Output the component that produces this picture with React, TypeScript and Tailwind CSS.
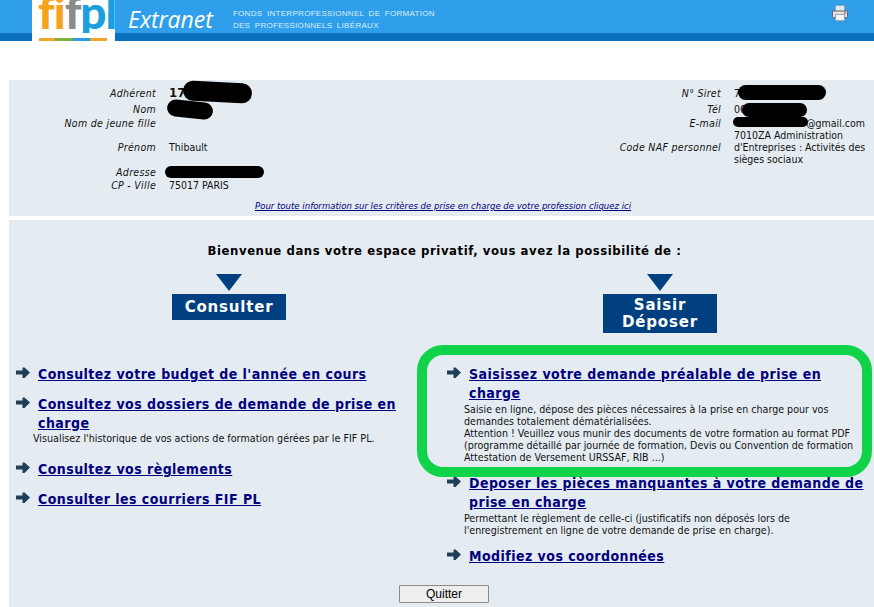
const tahoma = "font-['DejaVu_Sans_Condensed','DejaVu_Sans',sans-serif]";

function Blob({ className }: { className: string }) {
  return <div className={`absolute bg-black rounded-full ${className}`} />;
}

function Arrow() {
  return (
    <svg width="14" height="12" viewBox="0 0 14 12" className="shrink-0 mt-[2px]">
      <path d="M0 3.500h6.500V0.500h2L14 5.500 8.500 11h-2V7.500H0z" fill="#1f3f57" />
    </svg>
  );
}

function Printer() {
  return (
    <svg width="16" height="16" viewBox="0 0 16 16">
      <rect x="3.500" y="0.500" width="9" height="6" fill="#dfeaf2" stroke="#8fa3b3" />
      <rect x="0.500" y="6" width="15" height="6.500" rx="1" fill="#e8e4e4" stroke="#6a5a66" />
      <rect x="3.500" y="9.500" width="9" height="6" fill="#f5f7f8" stroke="#8fa3b3" />
      <rect x="12" y="7.500" width="2" height="1" fill="#7a3a4a" />
    </svg>
  );
}

function Header() {
  return (
    <header className="relative h-[41px] bg-[#2f9fec] border-b-[8px] border-[#0b71bf]">
      <div className="flex h-[33px] items-start">
        <div className="relative z-10 ml-[32px] w-[83px] h-[41px] bg-white overflow-hidden shrink-0">
          <div className="h-[33px] overflow-hidden">
            <div className="font-['Lato',sans-serif] font-black text-[46px] leading-[46px] mt-[-11px] ml-[6px] tracking-[-1px]">
              <span className="text-[#f7a21c]">fi</span>
              <span className="text-[#8b8b8b]">f</span>
              <span className="text-[#1c9fe0]">pl</span>
            </div>
          </div>
          <div className="absolute left-[7px] bottom-0 h-[3px] w-[68px] flex">
            <div className="w-[16px] bg-[#f2a32a]" />
            <div className="w-[18px] bg-[#7fae3a]" />
            <div className="w-[17px] bg-[#2a9fe0]" />
            <div className="w-[17px] bg-[#f2a32a]" />
          </div>
        </div>
        <div className="ml-[13px] mt-[4px] font-['Open_Sans',sans-serif] italic text-white text-[23px] leading-[30px]">Extranet</div>
        <div className="ml-[20px] mt-[8px] font-['Liberation_Sans',sans-serif] text-[#dcedfa] text-[8px] leading-[12px] tracking-[0.3px] [word-spacing:2px]">
          <div>FONDS INTERPROFESSIONNEL DE FORMATION</div>
          <div>DES PROFESSIONNELS LIBÉRAUX</div>
        </div>
        <div className="ml-auto mr-[26px] mt-[5px]">
          <Printer />
        </div>
      </div>
    </header>
  );
}

function InfoRow({ label, children, h, labelW }: { label: string; children?: React.ReactNode; h: string; labelW: string }) {
  return (
    <div className={`flex items-center ${h}`}>
      <div className={`${labelW} shrink-0 text-right italic tracking-[0.3px]`}>{label}</div>
      <div className="ml-[13px]">{children}</div>
    </div>
  );
}

function InfoPanel() {
  return (
    <section className="relative ml-[9px] mt-[39px] h-[136px] bg-[#e4ecf1] text-[10.500px] leading-[12px] text-[#111]">
      <div className="flex pt-[6px]">
        <div className="w-[500px]">
          <InfoRow label="Adhérent" h="h-[14px]" labelW="w-[147px]">
            <span className="text-[13px] font-semibold">17</span>
          </InfoRow>
          <InfoRow label="Nom" h="h-[14px] mt-[2px]" labelW="w-[147px]" />
          <InfoRow label="Nom de jeune fille" h="h-[13px]" labelW="w-[147px]" />
          <InfoRow label="Prénom" h="h-[12px] mt-[12px]" labelW="w-[147px]">Thibault</InfoRow>
          <InfoRow label="Adresse" h="h-[13px] mt-[12px]" labelW="w-[147px]" />
          <InfoRow label="CP - Ville" h="h-[13px]" labelW="w-[147px]">75017 PARIS</InfoRow>
        </div>
        <div className="flex-1">
          <InfoRow label="N° Siret" h="h-[14px]" labelW="w-[212px]">7</InfoRow>
          <InfoRow label="Tél" h="h-[14px] mt-[2px]" labelW="w-[212px]">06</InfoRow>
          <InfoRow label="E-mail" h="h-[13px]" labelW="w-[212px]">
            <span className="block w-[131px] text-right">@gmail.com</span>
          </InfoRow>
          <InfoRow label="Code NAF personnel" h="h-[36px]" labelW="w-[212px]">
            <div className="w-[136px]">7010ZA Administration d'Entreprises : Activités des sièges sociaux</div>
          </InfoRow>
        </div>
      </div>
      <a className="absolute left-[246px] top-[120px] text-[9.500px] leading-[12px] italic text-[#000080] underline whitespace-nowrap">
        Pour toute information sur les critères de prise en charge de votre profession cliquez ici
      </a>
      <Blob className="left-[174px] top-[2px] w-[69px] h-[20px] rotate-[3deg]" />
      <Blob className="left-[158px] top-[21px] w-[46px] h-[17px] rotate-[6deg]" />
      <Blob className="left-[156px] top-[86px] w-[99px] h-[12px]" />
      <Blob className="left-[729px] top-[5px] w-[88px] h-[15px]" />
      <Blob className="left-[733px] top-[23px] w-[65px] h-[14px]" />
      <Blob className="left-[724px] top-[37px] w-[75px] h-[10px]" />
    </section>
  );
}

function LinkItem({ title, children }: { title: string; children?: React.ReactNode }) {
  return (
    <li>
      <div className="flex gap-[8px]">
        <Arrow />
        <a className="font-bold text-[14px] leading-[19px] tracking-[0.45px] text-[#000080] underline">{title}</a>
      </div>
      {children}
    </li>
  );
}

function ChoiceBox({ lines, h }: { lines: string[]; h: string }) {
  return (
    <div className="flex flex-col items-center w-[114px]">
      <div className="w-0 h-0 border-x-[13px] border-x-transparent border-t-[17px] border-t-[#004080]" />
      <div className={`mt-[3px] w-[114px] ${h} bg-[#004080] text-white font-['DejaVu_Sans',sans-serif] font-bold text-[15px] leading-[17px] tracking-[0.8px] text-center flex flex-col justify-center`}>
        {lines.map((l) => (
          <span key={l}>{l}</span>
        ))}
      </div>
    </div>
  );
}

function MainPanel() {
  return (
    <section className="relative ml-[9px] mt-[4px] h-[387px] bg-[#e4ecf1] text-[#111]">
      <h2 className="pt-[22px] text-center font-semibold text-[13px] leading-[18px] tracking-[0.55px] pl-[6px] text-black">
        Bienvenue dans votre espace privatif, vous avez la possibilité de :
      </h2>
      <div className="mt-[14px] h-[87px] flex items-start pl-[163px] gap-[317px]">
        <ChoiceBox lines={["Consulter"]} h="h-[26px]" />
        <ChoiceBox lines={["Saisir", "Déposer"]} h="h-[39px]" />
      </div>
      <div className="flex mt-[4px]">
        <ul className="w-[431px] pl-[7px] flex flex-col gap-[11px] shrink-0">
          <LinkItem title="Consultez votre budget de l'année en cours" />
          <LinkItem title="Consultez vos dossiers de demande de prise en charge">
            <p className="ml-[17px] mb-[5px] text-[10.700px] leading-[11px]">Visualisez l'historique de vos actions de formation gérées par le FIF PL.</p>
          </LinkItem>
          <LinkItem title="Consultez vos règlements" />
          <LinkItem title="Consulter les courriers FIF PL" />
        </ul>
        <ul className="flex-1 pl-[7px] pr-[8px] flex flex-col gap-[11px]">
          <LinkItem title="Saisissez votre demande préalable de prise en charge">
            <p className="ml-[17px] text-[10.600px] leading-[12px] -mr-[8px] whitespace-nowrap">
              Saisie en ligne, dépose des pièces nécessaires à la prise en charge pour vos<br />
              demandes totalement dématérialisées.<br />
              Attention ! Veuillez vous munir des documents de votre formation au format PDF<br />
              (programme détaillé par journée de formation, Devis ou Convention de formation<br />
              Attestation de Versement URSSAF, RIB ...)
            </p>
          </LinkItem>
          <LinkItem title="Deposer les pièces manquantes à votre demande de prise en charge">
            <p className="ml-[17px] text-[10.600px] leading-[12px] whitespace-nowrap">
              Permettant le règlement de celle-ci (justificatifs non déposés lors de<br />
              l'enregistrement en ligne de votre demande de prise en charge).
            </p>
          </LinkItem>
          <LinkItem title="Modifiez vos coordonnées" />
        </ul>
      </div>
      <div className="absolute left-[408px] top-[125px] w-[455px] h-[132px] rounded-[26px] border-[10px] border-[#10d34a] pointer-events-none" />
      <button className="absolute left-[390px] top-[365px] w-[90px] h-[18px] bg-[#eeeeee] border border-[#8a8a8a] rounded-[1px] font-['Liberation_Sans',sans-serif] text-[12px] leading-[16px] text-black">
        Quitter
      </button>
    </section>
  );
}

export default function App() {
  return (
    <div className={`w-[874px] h-[607px] overflow-hidden bg-white ${tahoma}`}>
      <Header />
      <InfoPanel />
      <MainPanel />
    </div>
  );
}
